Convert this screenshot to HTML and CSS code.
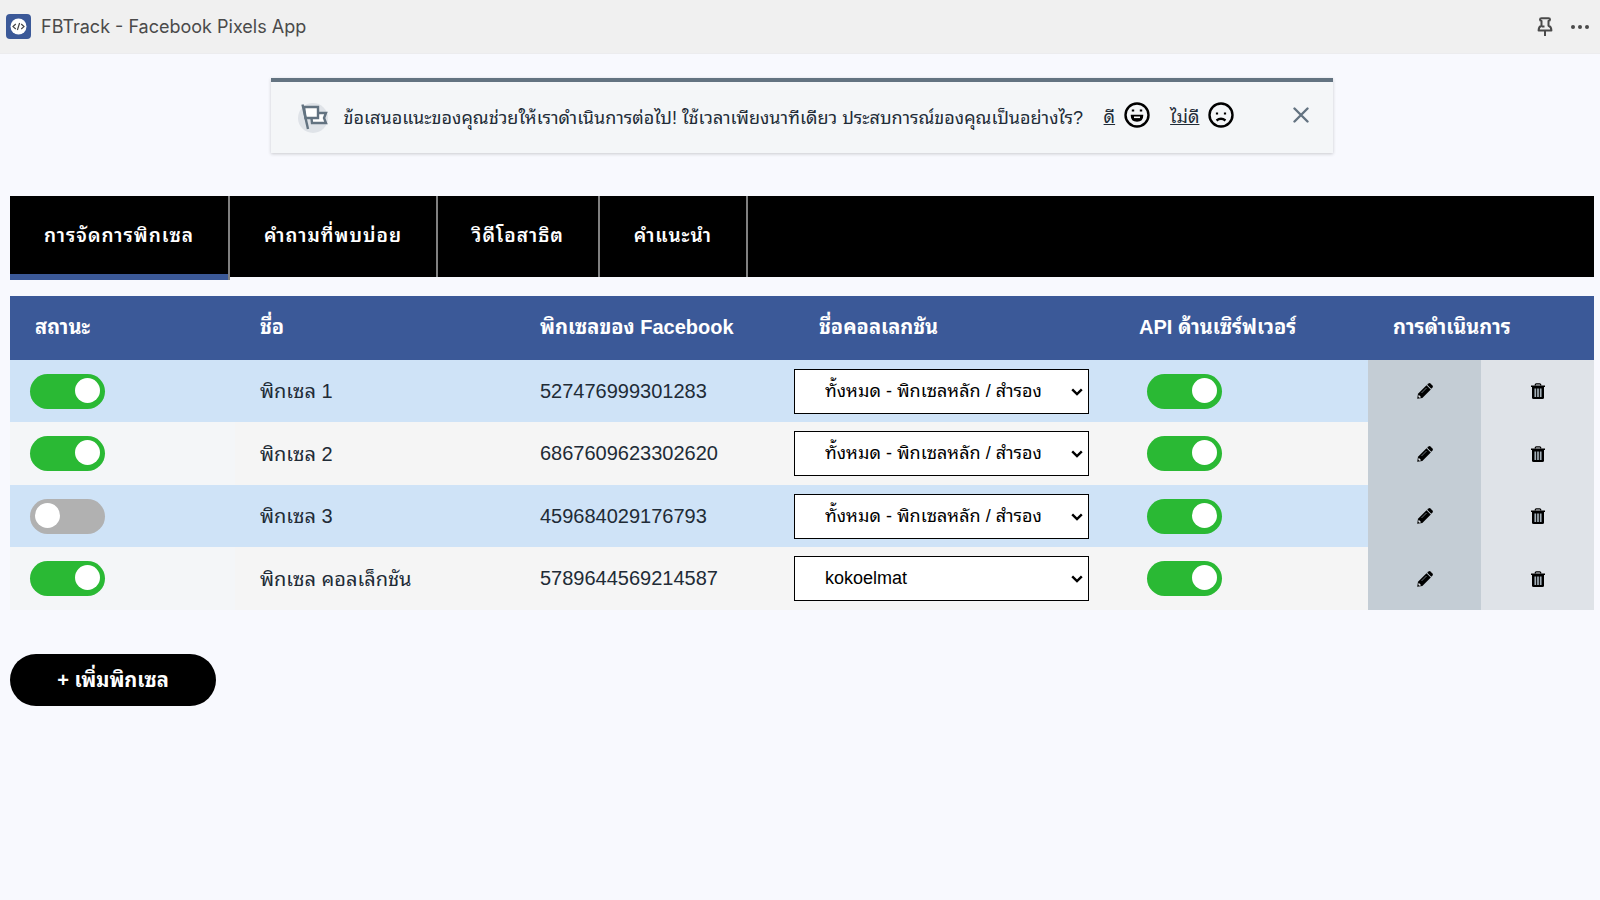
FILE: index.html
```html
<!DOCTYPE html>
<html lang="th">
<head>
<meta charset="utf-8">
<title>FBTrack - Facebook Pixels App</title>
<link rel="stylesheet" href="styles.css">
</head>
<body>
<svg class="defs" aria-hidden="true">
  <symbol id="pencil" viewBox="0 0 16 16"><path d="M0.2 15.800 1 10.700 9.500 2.200 13.800 6.500 5.300 15Z"/><path d="M10.200 1.700 11.500.5Q12.500-.3 13.400.5L15.500 2.600Q16.300 3.500 15.500 4.500L14.300 5.800Z"/><path d="M1.700 11.800 4.200 14.300 2.300 14.700 1.300 13.700Z" fill="#dfe3e8"/><path d="M4.500 10 9.500 5" stroke="#6b747b" stroke-width="1"/></symbol>
  <symbol id="trash" viewBox="0 0 14 16"><path d="M4.3 2.500V1.800Q4.300.8 5.300.8H8.700Q9.700.8 9.700 1.800V2.500" fill="none" stroke="#000" stroke-width="1.300"/><path d="M0 2.500H14V4H0Z"/><path d="M1 4H13V14.500Q13 16 11.500 16H2.500Q1 16 1 14.500Z"/><path d="M4.300 5.400V14M7 5.400V14M9.700 5.400V14" stroke="#a3afb8" stroke-width="1.700"/></symbol>
  <symbol id="chevron" viewBox="0 0 12 8"><path d="M1.2 1.3 6 6 10.8 1.3" fill="none" stroke="#000" stroke-width="2.4"/></symbol>
</svg>
<header class="topbar">
  <svg class="logo" viewBox="0 0 25 25" aria-hidden="true"><rect width="25" height="25" rx="4" fill="#3b5998"/><circle cx="12.5" cy="12.5" r="8" fill="#fff"/><path d="M9.8 10 7 12.6 9.8 15M15.2 10 18 12.6 15.2 15M13.6 9 11.4 16" fill="none" stroke="#444" stroke-width="1.2"/></svg>
  <h1 class="app-name">FBTrack - Facebook Pixels App</h1>
  <button class="icon-btn" aria-label="ปักหมุด"><svg width="16" height="20" viewBox="0 0 16 20" fill="none" stroke="#4a4a4a" stroke-width="2" stroke-linejoin="round"><path d="M4.5 1.2H11.5Q13 1.2 13 2.4 13 3.6 11.5 4V8.7Q14.4 9.8 14.4 13.4H1.6Q1.6 9.8 4.5 8.7V4Q3 3.6 3 2.4 3 1.2 4.5 1.2Z"/><path d="M8 13.4V19M4.8 9.4H7.5"/></svg></button>
  <button class="icon-btn" aria-label="เพิ่มเติม"><svg width="18" height="4" viewBox="0 0 18 4" fill="#4a4a4a"><circle cx="2" cy="2" r="2"/><circle cx="9" cy="2" r="2"/><circle cx="16" cy="2" r="2"/></svg></button>
</header>
<main class="page">
  <section class="banner">
    <svg class="flag" width="30" height="30" viewBox="0 0 30 30"><circle cx="15" cy="15" r="15" fill="#dfe3e8"/><g fill="#fff" stroke="#637381" stroke-width="2.4"><path d="M13 10H28L26 15 28 20H14Z"/><path d="M6 4H20V15H7.5Z"/><path d="M4.5 1.5 10 26" fill="none"/></g></svg>
    <p class="banner-text">ข้อเสนอแนะของคุณช่วยให้เราดำเนินการต่อไป! ใช้เวลาเพียงนาทีเดียว ประสบการณ์ของคุณเป็นอย่างไร?</p>
    <a class="rate" href="#good"><span>ดี</span><svg width="26" height="26" viewBox="0 0 26 26" fill="none" stroke="#000"><circle cx="13" cy="13" r="11.5" stroke-width="2.4"/><path d="M7.5 13.5H18.5Q18.5 19 13 19T7.5 13.5Z" fill="#000" stroke-width="1.5"/><path d="M10 15.3H16" stroke="#fff" stroke-width="1.6"/><path d="M9 7.5V9.5M17 7.5V9.5" stroke-width="2.4"/></svg></a>
    <a class="rate" href="#bad"><span>ไม่ดี</span><svg width="26" height="26" viewBox="0 0 26 26" fill="none" stroke="#000"><circle cx="13" cy="13" r="11.5" stroke-width="2.4"/><path d="M8.5 18.5Q13 15 17.5 18.5" stroke-width="2.4"/><path d="M9 10.5V12.5M17 10.5V12.5" stroke-width="2.2"/></svg></a>
    <button class="close" aria-label="ปิด"><svg width="16" height="16" viewBox="0 0 16 16"><path d="M1.5 1.5 14.5 14.5M14.5 1.5 1.5 14.5" stroke="#637381" stroke-width="2.4" stroke-linecap="round"/></svg></button>
  </section>
  <nav class="tabs">
    <a class="tab active" href="#manage">การจัดการพิกเซล</a>
    <a class="tab" href="#faq">คำถามที่พบบ่อย</a>
    <a class="tab" href="#demo">วิดีโอสาธิต</a>
    <a class="tab" href="#guide">คำแนะนำ</a>
  </nav>
  <table class="pixels">
    <colgroup><col class="c-status"><col class="c-name"><col class="c-id"><col class="c-coll"><col class="c-api"><col class="c-act"><col class="c-act"></colgroup>
    <thead><tr><th>สถานะ</th><th>ชื่อ</th><th>พิกเซลของ Facebook</th><th>ชื่อคอลเลกชัน</th><th>API ด้านเซิร์ฟเวอร์</th><th colspan="2">การดำเนินการ</th></tr></thead>
    <tbody>
      <tr><td class="status"><input class="switch" type="checkbox" aria-label="สถานะ พิกเซล 1" checked></td><td class="name">พิกเซล 1</td><td>527476999301283</td><td class="coll"><div class="select"><select aria-label="คอลเลกชัน พิกเซล 1"><option>ทั้งหมด - พิกเซลหลัก / สำรอง</option></select><svg><use href="#chevron"/></svg></div></td><td class="api"><input class="switch" type="checkbox" aria-label="API พิกเซล 1" checked></td><td class="edit"><button aria-label="แก้ไข"><svg width="16" height="16"><use href="#pencil"/></svg></button></td><td class="delete"><button aria-label="ลบ"><svg width="14" height="16"><use href="#trash"/></svg></button></td></tr>
      <tr><td class="status"><input class="switch" type="checkbox" aria-label="สถานะ พิกเซล 2" checked></td><td class="name">พิกเซล 2</td><td>6867609623302620</td><td class="coll"><div class="select"><select aria-label="คอลเลกชัน พิกเซล 2"><option>ทั้งหมด - พิกเซลหลัก / สำรอง</option></select><svg><use href="#chevron"/></svg></div></td><td class="api"><input class="switch" type="checkbox" aria-label="API พิกเซล 2" checked></td><td class="edit"><button aria-label="แก้ไข"><svg width="16" height="16"><use href="#pencil"/></svg></button></td><td class="delete"><button aria-label="ลบ"><svg width="14" height="16"><use href="#trash"/></svg></button></td></tr>
      <tr><td class="status"><input class="switch" type="checkbox" aria-label="สถานะ พิกเซล 3"></td><td class="name">พิกเซล 3</td><td>459684029176793</td><td class="coll"><div class="select"><select aria-label="คอลเลกชัน พิกเซล 3"><option>ทั้งหมด - พิกเซลหลัก / สำรอง</option></select><svg><use href="#chevron"/></svg></div></td><td class="api"><input class="switch" type="checkbox" aria-label="API พิกเซล 3" checked></td><td class="edit"><button aria-label="แก้ไข"><svg width="16" height="16"><use href="#pencil"/></svg></button></td><td class="delete"><button aria-label="ลบ"><svg width="14" height="16"><use href="#trash"/></svg></button></td></tr>
      <tr><td class="status"><input class="switch" type="checkbox" aria-label="สถานะ พิกเซล คอลเล็กชัน" checked></td><td class="name">พิกเซล คอลเล็กชัน</td><td>5789644569214587</td><td class="coll"><div class="select"><select aria-label="คอลเลกชัน พิกเซล คอลเล็กชัน"><option>kokoelmat</option></select><svg><use href="#chevron"/></svg></div></td><td class="api"><input class="switch" type="checkbox" aria-label="API พิกเซล คอลเล็กชัน" checked></td><td class="edit"><button aria-label="แก้ไข"><svg width="16" height="16"><use href="#pencil"/></svg></button></td><td class="delete"><button aria-label="ลบ"><svg width="14" height="16"><use href="#trash"/></svg></button></td></tr>
    </tbody>
  </table>
  <button class="add">+ เพิ่มพิกเซล</button>
</main>
</body>
</html>
```
FILE: styles.css
```css
* { box-sizing: border-box; }
body { margin: 0; background: #f8f9fe; color: #212b36; font-family: "Liberation Sans", "Noto Sans Thai Looped", Loma, "Noto Sans Thai", sans-serif; font-size: 20px; }
button { border: 0; padding: 0; background: none; font: inherit; cursor: pointer; }
svg { display: block; }
.defs { position: absolute; width: 0; height: 0; }
.topbar { display: flex; align-items: center; gap: 18px; height: 54px; padding: 0 11px 0 6px; background: #f0f0f0; border-bottom: 1px solid #ececee; }
.logo { width: 25px; height: 25px; }
.app-name { flex: 1; margin: 0 0 0 -8px; font-family: Inter, sans-serif; font-size: 18px; font-weight: 400; color: #4a4a4a; }
.page { padding: 24px 6px 24px 10px; }
.banner { display: flex; align-items: center; width: 67.1%; height: 75px; margin: 0 auto 43px; padding: 0 24px 0 27px; background: #f4f6f8; border-top: 4px solid #637381; box-shadow: 0 1px 3px rgba(63, 63, 68, .25); }
.banner-text { flex: 1; margin: 0 0 0 16px; padding-bottom: 4px; font-size: 18px; white-space: nowrap; }
.rate { display: flex; align-items: center; gap: 9px; margin-right: 20px; padding-bottom: 5px; color: inherit; font-size: 18px; }
.close { margin-left: 39px; padding-bottom: 5px; }
.tabs { display: flex; height: 81px; margin-bottom: 19px; background: #000; }
.tab { display: flex; align-items: center; height: 81px; padding: 0 34px 6px; border-right: 2px solid #808080; color: #fff; font-size: 19px; font-weight: 600; letter-spacing: 1px; text-decoration: none; white-space: nowrap; }
.tab.active { height: 84px; padding-bottom: 9px; box-shadow: inset 0 -6px #3b5998; }
.pixels { width: 100%; table-layout: fixed; border-collapse: collapse; }
.c-status { width: 225px; }
.c-name { width: 280px; }
.c-id { width: 279px; }
.c-coll { width: 320px; }
.c-api { width: 254px; }
.c-act { width: 113px; }
th { height: 64px; padding: 0 0 7px 25px; background: #3b5998; color: #fff; font-size: 20px; text-align: left; }
td { height: 63px; padding: 0 0 0 25px; background: #f5f5f5; }
tr:nth-child(odd) td { height: 62px; background: #cfe3f7; }
td.status { padding-left: 20px; }
tr:nth-child(even) td.status { background: #f4f6f8; }
td.name { padding-bottom: 4px; }
td.api { padding-left: 33px; }
td.coll { padding: 0 25px 0 0; }
tr td.edit.edit, tr td.delete.delete { padding: 0; text-align: center; background: #c4cdd5; }
tr td.delete.delete { background: #dfe3e8; }
td button { display: inline-block; padding-bottom: 2px; vertical-align: middle; }
.switch { appearance: none; display: block; width: 75px; height: 35px; margin: 0; padding: 4px 5px; border-radius: 18px; background: #b1b1b1; }
.switch::before { content: ""; display: block; width: 25px; height: 25px; border-radius: 50%; background: #fff; }
.switch:checked { background: #2ab934; }
.switch:checked::before { margin-left: auto; }
.select { position: relative; }
.select select { appearance: none; display: block; width: 100%; height: 45px; padding: 0 30px; border: 1px solid #000; border-radius: 0; background: #fff; color: #000; font: inherit; font-size: 18px; line-height: 43px; }
.select svg { position: absolute; right: 6px; top: 19px; width: 12px; height: 8px; pointer-events: none; }
.add { min-width: 206px; margin-top: 44px; height: 52px; padding: 0 44px 4px; border-radius: 26px; background: #000; color: #fff; font-weight: 700; font-size: 20px; }
```
